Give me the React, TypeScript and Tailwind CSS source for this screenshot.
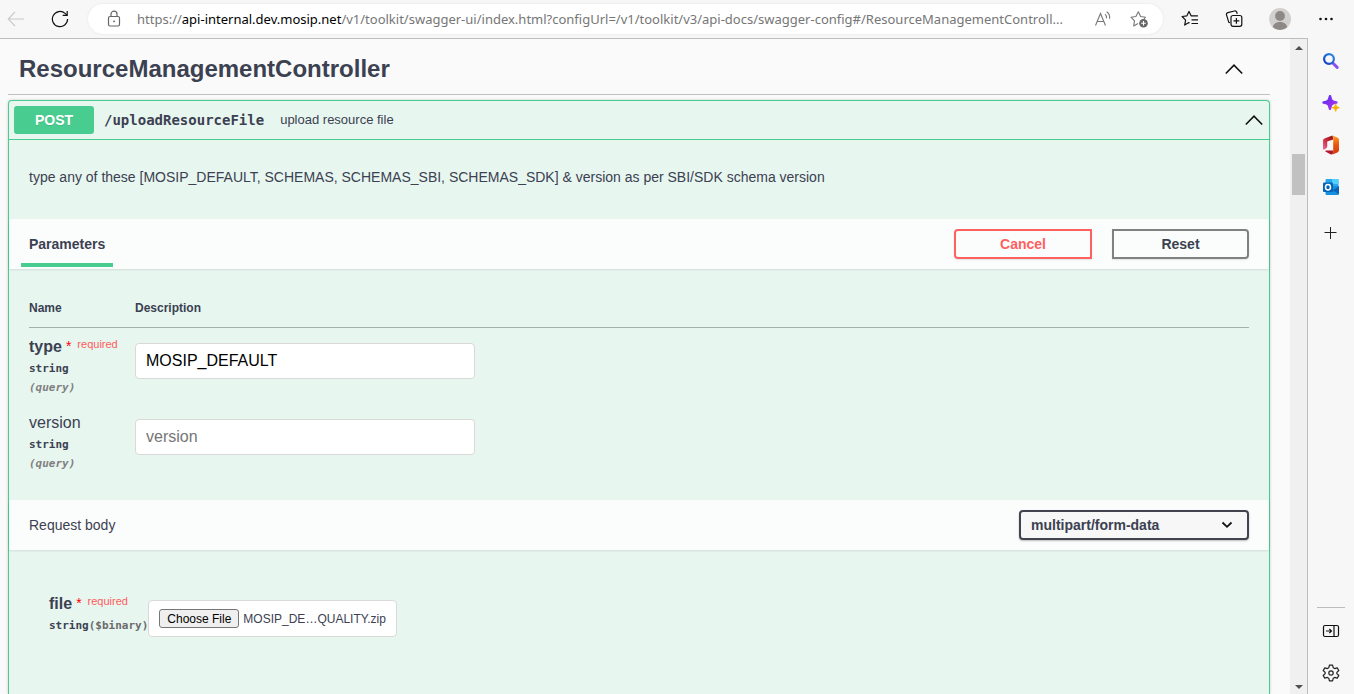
import { useRef, useState } from "react";
import type { ReactNode } from "react";

function Chevron() {
  return (
    <svg width="20" height="20" viewBox="0 0 20 20" fill="none" stroke="#111" strokeWidth="1.6" aria-hidden="true">
      <path d="M1.8 14.5 10 6.2l8.200 8.300" />
    </svg>
  );
}

function IconButton({ label, className, children }: { label: string; className: string; children: ReactNode }) {
  return (
    <button type="button" aria-label={label} className={`flex shrink-0 items-center justify-center ${className}`}>
      {children}
    </button>
  );
}

function Toolbar() {
  return (
    <header className="flex h-[38px] shrink-0 items-center bg-[#f7f7f7]">
      <IconButton label="Back" className="h-8 w-8">
        <svg width="18" height="18" viewBox="0 0 18 18" fill="none" stroke="#c9c9c9" strokeWidth="1.1">
          <path d="M17 9H1.500M8 2 1.200 9 8 16" />
        </svg>
      </IconButton>
      <IconButton label="Refresh" className="ml-3 h-8 w-8">
        <svg width="18" height="18" viewBox="0 0 18 18" fill="none" stroke="#111" strokeWidth="1.2">
          <path d="M16.600 9a7.600 7.600 0 1 1-2.500-5.600L16 5.200" />
          <path d="M16.200 1v4.400h-4.500" />
        </svg>
      </IconButton>
      <div className="ml-3 flex h-[30px] min-w-0 flex-1 items-center rounded-full bg-white pr-3 pl-[18px] shadow-[0_0_3px_rgba(0,0,0,0.08)]">
        <svg className="shrink-0" width="16" height="18" viewBox="0 0 16 18" fill="none" stroke="#666" strokeWidth="1.2" aria-hidden="true">
          <rect x="2.500" y="6.500" width="11" height="9.500" rx="1.500" />
          <path d="M5 6.500V4.200a3 3 0 0 1 6 0v2.300" />
          <circle cx="8" cy="11.300" r="0.900" fill="#555" stroke="none" />
        </svg>
        <div className="ml-[15px] min-w-0 flex-1 truncate font-['Noto_Sans',sans-serif] text-[13px] leading-5 text-[#767676]">
          https://<span className="text-black">api-internal.dev.mosip.net</span>
          /v1/toolkit/swagger-ui/index.html?configUrl=/v1/toolkit/v3/api-docs/swagger-config#/ResourceManagementControll...
        </div>
        <IconButton label="Read aloud" className="ml-2 h-6 w-6">
          <svg width="18" height="18" viewBox="0 0 18 18" fill="none" stroke="#777" strokeWidth="1.100">
            <path d="M1.500 15.500 6.500 3.500l5 12M3.200 11.500h6.600" />
            <path d="M11 4.200a4.500 4.500 0 0 1 1.500 4M12.700 1.800a7.500 7.500 0 0 1 2.900 7" />
          </svg>
        </IconButton>
        <IconButton label="Add to favorites" className="ml-3 h-6 w-6">
          <svg width="18" height="18" viewBox="0 0 18 18" fill="none" stroke="#777" strokeWidth="1.100">
            <path d="M8 13.600 3.700 15.900l.8-5L1 7.200l4.900-.7L8.300 1.800l2.300 4.700 4.900.7-1.500 1.600" strokeLinejoin="round" />
            <circle cx="13.500" cy="13.300" r="4.300" fill="#666" stroke="none" />
            <path d="M13.500 11v4.600M11.200 13.300h4.600" stroke="#fff" />
          </svg>
        </IconButton>
      </div>
      <IconButton label="Favorites" className="ml-[11px] h-8 w-8">
        <svg width="18" height="18" viewBox="0 0 18 18" fill="none" stroke="#111" strokeWidth="1.200" strokeLinejoin="round">
          <path d="M8.500 12.900 7.900 12.600 3.700 15.100l.9-5L1.100 6.500l4.800-.7L8 1.500l2.100 4.300h6.800M10.500 9.800h6.500M10.500 13.500h6.500" />
        </svg>
      </IconButton>
      <IconButton label="Collections" className="ml-3 h-8 w-8">
        <svg width="18" height="18" viewBox="0 0 18 18" fill="none" stroke="#111" strokeWidth="1.200">
          <path d="M5 12.800 3.800 12.400 1.500 4.800a1.800 1.800 0 0 1 1.300-2.200L9.500 1a2 2 0 0 1 2.300 1.300l.4 1.500" />
          <rect x="6" y="5.500" width="10.800" height="10.800" rx="2" />
          <path d="M11.400 8v5.800M8.500 10.900h5.800" />
        </svg>
      </IconButton>
      <IconButton label="Profile" className="ml-[14px] h-8 w-8">
        <svg width="22" height="22" viewBox="0 0 22 22">
          <circle cx="11" cy="11" r="11" fill="#d2d0ce" />
          <circle cx="11" cy="8" r="4.900" fill="#8d8986" />
          <path d="M3.800 19.200c.8-3.600 3.600-5.200 7.200-5.200s6.400 1.600 7.200 5.200A11 11 0 0 1 11 22a11 11 0 0 1-7.200-2.800z" fill="#8d8986" />
        </svg>
      </IconButton>
      <IconButton label="More" className="mr-3 ml-[14px] h-8 w-8">
        <svg width="16" height="4" viewBox="0 0 16 4" fill="#111">
          <circle cx="2.500" cy="2" r="1.300" />
          <circle cx="8" cy="2" r="1.300" />
          <circle cx="13.500" cy="2" r="1.300" />
        </svg>
      </IconButton>
    </header>
  );
}

function Sidebar() {
  return (
    <aside className="flex w-[46px] shrink-0 flex-col items-center bg-[#f7f7f7] pt-[7px]">
      <div className="flex flex-col gap-[10px]">
        <IconButton label="Search" className="h-8 w-8">
          <svg width="18" height="18" viewBox="0 0 18 18" fill="none">
            <defs>
              <linearGradient id="lens" x1="0" y1="1" x2="1" y2="0">
                <stop stopColor="#1438c8" />
                <stop offset="1" stopColor="#2a8fe0" />
              </linearGradient>
            </defs>
            <path d="m10.800 11 4.400 4.400" stroke="#8a50f0" strokeWidth="3" strokeLinecap="round" />
            <circle cx="7" cy="7" r="4.900" stroke="url(#lens)" strokeWidth="2.200" />
          </svg>
        </IconButton>
        <IconButton label="Discover" className="h-8 w-8">
          <svg width="18" height="18" viewBox="0 0 18 18">
            <defs>
              <linearGradient id="spark" x1="0" y1="0" x2="1" y2="1">
                <stop stopColor="#3d35f0" />
                <stop offset="0.500" stopColor="#8a2df0" />
                <stop offset="1" stopColor="#a44cf0" />
              </linearGradient>
            </defs>
            <path d="M8 1c.9 0 1.200.5 1.600 2.300.7 2.700 1 3 3.700 3.700 1.800.4 2.400.7 2.400 1.500s-.6 1.100-2.400 1.500c-2.700.7-3 1-3.700 3.700C9.200 15.500 8.900 16 8 16s-1.200-.5-1.600-2.300c-.7-2.700-1-3-3.700-3.700C.9 9.600.3 9.300.3 8.500S.9 7.400 2.700 7c2.700-.7 3-1 3.700-3.700C6.800 1.500 7.100 1 8 1z" fill="url(#spark)" />
            <path d="M13.700 9.800c.8 2.700 1.200 3.100 3.900 3.900-2.700.8-3.100 1.200-3.900 3.900-.8-2.700-1.200-3.100-3.900-3.900 2.700-.8 3.100-1.200 3.900-3.900z" fill="#f5b400" stroke="#f5b400" strokeWidth="0.600" />
          </svg>
        </IconButton>
        <IconButton label="Office" className="h-8 w-8">
          <svg width="18" height="20" viewBox="0 0 18 20">
            <defs>
              <linearGradient id="officeLeft" x1="1" y1="0" x2="0" y2="1">
                <stop stopColor="#8c0c10" />
                <stop offset="0.550" stopColor="#cb3040" />
                <stop offset="1" stopColor="#f070a8" />
              </linearGradient>
              <linearGradient id="officeRight" x1="0" y1="0" x2="0" y2="1">
                <stop stopColor="#ffa020" />
                <stop offset="0.500" stopColor="#e85410" />
                <stop offset="1" stopColor="#d03808" />
              </linearGradient>
            </defs>
            <path d="M10.500.5 3 3.200C1.700 3.700 1 4.600 1 6v8c0 .6.600.8 1.200.5l2-1.200c.7-.4 1-.9 1-1.700V6.500l6-2z" fill="url(#officeLeft)" />
            <path d="m10.500.5 4.800 2.100c1.200.5 1.700 1.300 1.700 2.600v9.600c0 1.300-.5 2.100-1.700 2.600l-4.800 2.100c.5-.6.700-1.200.7-2V2.500c0-.8-.2-1.400-.7-2z" fill="url(#officeRight)" />
            <path d="M3.800 15.500h7.400v2c0 1.400-1.400 2.400-2.800 1.700l-4.600-2.500c-.7-.4-.6-1.200 0-1.200z" fill="#b5182a" />
          </svg>
        </IconButton>
        <IconButton label="Outlook" className="h-8 w-8">
          <svg width="18" height="18" viewBox="0 0 18 18">
            <path d="M4.500 1h11a1 1 0 0 1 1 1v7h-13V2a1 1 0 0 1 1-1z" fill="#28a8ea" />
            <path d="M10 1h5.500a1 1 0 0 1 1 1v4H10z" fill="#50d0ff" />
            <path d="M3.500 8H17v7.800a1.200 1.200 0 0 1-1.200 1.200h-11a1.200 1.200 0 0 1-1.300-1.200z" fill="#1490df" />
            <path d="M17 8.500v7.500L10.500 12.200z" fill="#0a63b4" />
            <rect x="1" y="4.500" width="10" height="9.500" rx="1" fill="#0364b8" />
            <ellipse cx="6" cy="9.200" rx="2.500" ry="2.700" fill="none" stroke="#fff" strokeWidth="1.500" />
          </svg>
        </IconButton>
        <IconButton label="Add" className="mt-1 h-8 w-8">
          <svg width="14" height="14" viewBox="0 0 14 14" stroke="#222" strokeWidth="1">
            <path d="M6.500 1v12M.5 6.500h12" />
          </svg>
        </IconButton>
      </div>
      <div className="mt-auto mb-[5px] flex flex-col items-center gap-[10px]">
        <div className="-mb-[3px] w-[28px] border-t border-[#bdbdbd]" />
        <IconButton label="Hide sidebar" className="h-8 w-8">
          <svg width="18" height="18" viewBox="0 0 18 18" fill="none" stroke="#111" strokeWidth="1.200">
            <rect x="1.500" y="3.500" width="15" height="11" rx="1.500" />
            <path d="M12 3.500v11M4 9h5.500M7.300 6.800 9.500 9l-2.200 2.200" />
          </svg>
        </IconButton>
        <IconButton label="Settings" className="h-8 w-8">
          <svg width="18" height="18" viewBox="0 0 24 24" fill="none" stroke="#222" strokeWidth="1.600" strokeLinejoin="round">
            <circle cx="12" cy="12" r="2.900" />
            <path d="M9.900 1.500h4.200l.9 3.600 1.800 1 3.500-1 2.100 3.600-2.600 2.500v1.600l2.600 2.500-2.100 3.600-3.500-1-1.800 1-.9 3.600H9.900L9 18.900l-1.800-1-3.500 1-2.100-3.600 2.600-2.500v-1.600L1.600 8.700l2.100-3.600 3.500 1 1.800-1z" />
          </svg>
        </IconButton>
      </div>
    </aside>
  );
}

function Scrollbar() {
  return (
    <div className="flex w-[17px] shrink-0 flex-col items-center bg-[#f0f0f0] pt-[7px] pb-[5px]" aria-hidden="true">
      <svg width="8" height="4" viewBox="0 0 8 4" fill="#505050">
        <path d="M0 4 4 0l4 4z" />
      </svg>
      <div className="mt-[104px] h-[41px] w-[13px] bg-[#c1c1c1]" />
      <svg className="mt-auto" width="8" height="4" viewBox="0 0 8 4" fill="#505050">
        <path d="m0 0 4 4 4-4z" />
      </svg>
    </div>
  );
}

function Required() {
  return (
    <>
      <span className="ml-1 align-top text-[14px] leading-4 font-normal text-[#ff0000]">*</span>
      <span className="ml-[6px] align-top text-[11px] leading-3 font-normal text-[#ff5c5c]">required</span>
    </>
  );
}

function ParameterRow({ name, required, value }: { name: string; required?: boolean; value?: string }) {
  return (
    <tr className="align-top">
      <td className="pt-[10px] pb-1 whitespace-nowrap">
        <label htmlFor={name} className={`block text-base leading-[18px] ${required ? "font-bold" : ""}`}>
          {name}
          {required && <Required />}
        </label>
        <div className="pt-1 font-['DejaVu_Sans_Mono',monospace] text-[11px] leading-[18px] font-bold">string</div>
        <div className="pt-px font-['DejaVu_Sans_Mono',monospace] text-[11px] leading-[18px] font-bold text-[#808080] italic">(query)</div>
      </td>
      <td className="pt-[15px] pb-[25px]">
        <input
          id={name}
          type="text"
          defaultValue={value}
          placeholder={name}
          className="block h-9 w-full max-w-[340px] rounded border border-[#d9d9d9] bg-white px-[10px] text-base text-black placeholder:text-[#757575]"
        />
      </td>
    </tr>
  );
}

function FilePicker() {
  const input = useRef<HTMLInputElement>(null);
  const [fileName, setFileName] = useState("MOSIP_DE…QUALITY.zip");
  return (
    <div className="relative flex h-[37px] items-center rounded border border-[#d9d9d9] bg-white px-[10px]">
      <button
        type="button"
        onClick={() => input.current?.click()}
        className="flex h-[19px] w-20 items-center justify-center rounded-[3px] border border-[#767676] bg-[#efefef] text-[12px] leading-4 text-black"
      >
        Choose File
      </button>
      <span className="ml-1 text-[12px] leading-4">{fileName}</span>
      <input
        ref={input}
        id="file"
        type="file"
        className="sr-only"
        onChange={(event) => setFileName(event.target.files?.[0]?.name ?? fileName)}
      />
    </div>
  );
}

function Operation() {
  return (
    <section className="mt-[5px] flex-1 rounded-t border border-b-0 border-[#49cc90] bg-[#e8f6f0] shadow-[0_0_3px_rgba(0,0,0,0.19)]">
      <div className="flex h-[39px] items-center border-b border-[#49cc90] pr-[5px] pl-[5px]">
        <span className="w-20 rounded-[3px] bg-[#49cc90] text-center text-sm leading-7 font-bold text-white [text-shadow:0_1px_0_rgba(0,0,0,0.1)]">
          POST
        </span>
        <span className="ml-[10px] font-['DejaVu_Sans_Mono',monospace] text-sm font-bold">/uploadResourceFile</span>
        <span className="ml-4 flex-1 text-[13px]">upload resource file</span>
        <button type="button" aria-label="Collapse operation">
          <Chevron />
        </button>
      </div>
      <p className="px-5 pt-[27px] pb-8 text-sm">
        type any of these [MOSIP_DEFAULT, SCHEMAS, SCHEMAS_SBI, SCHEMAS_SDK] &amp; version as per SBI/SDK schema version
      </p>

      <div className="flex h-[50px] items-center bg-[#fbfdfc] pr-5 pl-3 shadow-[0_1px_2px_rgba(0,0,0,0.1)]">
        <h4 className="border-b-4 border-[#49cc90] px-2 pt-[13px] pb-[9px] text-sm font-bold">Parameters</h4>
        <div className="ml-auto flex gap-5">
          <button
            type="button"
            className="h-[30px] w-[138px] rounded-l border-2 border-[#ff6060] text-sm font-bold text-[#ff6060] shadow-[0_1px_2px_rgba(0,0,0,0.1)]"
          >
            Cancel
          </button>
          <button
            type="button"
            className="h-[30px] w-[137px] rounded-r border-2 border-[#808080] text-sm font-bold shadow-[0_1px_2px_rgba(0,0,0,0.1)]"
          >
            Reset
          </button>
        </div>
      </div>

      <div className="p-5">
        <table className="w-full table-fixed border-collapse">
          <thead>
            <tr className="border-b border-[#a3b0ac] text-left text-[12px] leading-[14px]">
              <th className="w-[106px] pt-3 pb-3">Name</th>
              <th className="pt-3 pb-3">Description</th>
            </tr>
          </thead>
          <tbody>
            <ParameterRow name="type" required value="MOSIP_DEFAULT" />
            <ParameterRow name="version" />
          </tbody>
        </table>
      </div>

      <div className="flex h-[50px] items-center justify-between bg-[#fbfdfc] px-5 shadow-[0_1px_2px_rgba(0,0,0,0.1)]">
        <label htmlFor="content-type" className="text-sm">
          Request body
        </label>
        <div className="relative">
          <select
            id="content-type"
            className="block h-[30px] w-[230px] appearance-none rounded border-2 border-[#41444e] bg-[#f7f7f7] pl-[10px] text-sm leading-5 font-bold shadow-[0_1px_2px_rgba(0,0,0,0.25)]"
          >
            <option>multipart/form-data</option>
          </select>
          <svg className="pointer-events-none absolute top-[10px] right-4" width="12" height="10" viewBox="0 0 12 10" fill="none" stroke="#111" strokeWidth="1.800" aria-hidden="true">
            <path d="m1.500 2.500 4.500 4.300 4.500-4.300" />
          </svg>
        </div>
      </div>

      <div className="flex px-10 pt-[45px] pb-10">
        <div>
          <label htmlFor="file" className="block text-base leading-[18px] font-bold">
            file
            <Required />
          </label>
          <div className="pt-1 font-['DejaVu_Sans_Mono',monospace] text-[11px] leading-[18px] font-bold">
            string<span className="text-[#6b6b6b]">($binary)</span>
          </div>
        </div>
        <div className="mt-[5px]">
          <FilePicker />
        </div>
      </div>
    </section>
  );
}

export default function App() {
  return (
    <div className="flex h-screen flex-col overflow-hidden bg-[#f7f7f7] font-['Liberation_Sans',Arial,sans-serif] text-[#3b4151]">
      <Toolbar />
      <div className="flex min-h-0 flex-1">
        <div className="flex min-w-0 flex-1 border-t border-r border-[#bdbdbd]">
          <main className="flex min-w-0 flex-1 flex-col overflow-hidden bg-[#fafafa] pr-5 pl-2">
            <div className="flex h-14 shrink-0 items-center justify-between border-b border-[#c0c1c4] pr-[26px] pb-1 pl-[11px] pt-2">
              <h2 className="text-2xl font-bold">ResourceManagementController</h2>
              <button type="button" aria-label="Collapse section">
                <Chevron />
              </button>
            </div>
            <Operation />
          </main>
          <Scrollbar />
        </div>
        <Sidebar />
      </div>
    </div>
  );
}
